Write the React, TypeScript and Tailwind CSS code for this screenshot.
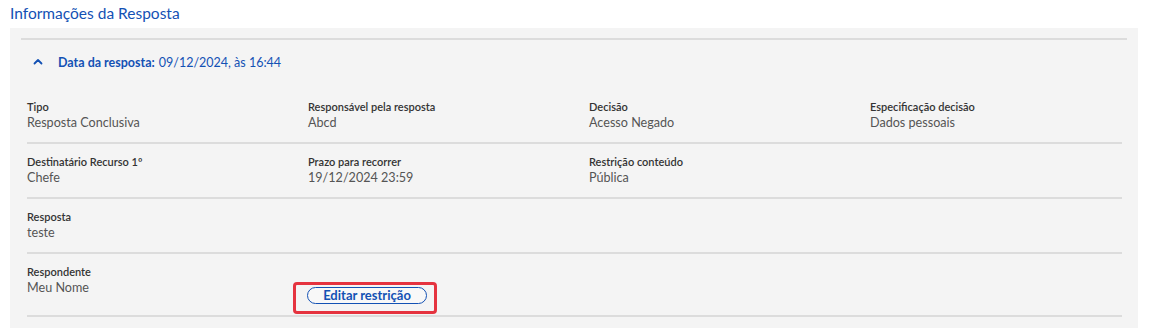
import React from "react";

const font = { fontFamily: "Lato, 'Open Sans', sans-serif" };

function Field({ label, value }: { label: string; value?: string }) {
  return (
    <div className="flex flex-col">
      <div className="text-[11px] leading-[16px] font-semibold text-[#333333]">{label}</div>
      {value !== undefined && (
        <div className="text-[12.6px] leading-[16px] text-[#555555]">{value}</div>
      )}
    </div>
  );
}

export default function App() {
  return (
    <div className="w-[1150px] h-[333px] bg-white" style={font}>
      <div className="h-[28px] pl-[10px] flex items-center text-[15.5px] text-[#1351b4]">
        Informações da Resposta
      </div>
      <div className="ml-[10px] w-[1128px] bg-[#f4f4f4] px-[11px] pt-[10px] pb-[11px]">
        <div className="h-[2px] bg-[#dcdcdc]" />
        <div className="h-[46px] flex items-center pl-[12px] text-[12.5px] text-[#1351b4]">
          <svg width="10" height="7" viewBox="0 0 10 7" className="mr-[15px] -mt-[3px]">
            <path d="M1.5 5.5 L5 2 L8.5 5.5" fill="none" stroke="#1351b4" strokeWidth="1.8" strokeLinecap="round" strokeLinejoin="round" />
          </svg>
          <span className="font-bold">Data da resposta:</span>
          <span className="ml-[4px]">09/12/2024, às 16:44</span>
        </div>
        <div className="ml-[6px] mr-[5px] mt-[3px]">
          <div className="grid grid-cols-[281px_281px_281px_1fr] pt-[10px] pb-[11px] border-b-2 border-[#dcdcdc]">
            <Field label="Tipo" value="Resposta Conclusiva" />
            <Field label="Responsável pela resposta" value="Abcd" />
            <Field label="Decisão" value="Acesso Negado" />
            <Field label="Especificação decisão" value="Dados pessoais" />
          </div>
          <div className="grid grid-cols-[281px_281px_281px_1fr] pt-[10px] pb-[11px] border-b-2 border-[#dcdcdc]">
            <Field label="Destinatário Recurso 1º" value="Chefe" />
            <Field label="Prazo para recorrer" value="19/12/2024 23:59" />
            <Field label="Restrição conteúdo" value="Pública" />
            <div />
          </div>
          <div className="grid grid-cols-[281px_281px_281px_1fr] pt-[10px] pb-[11px] border-b-2 border-[#dcdcdc]">
            <Field label="Resposta" value="teste" />
          </div>
          <div className="grid grid-cols-[281px_281px_281px_1fr] pt-[10px] pb-[1px] border-b-2 border-[#dcdcdc]">
            <Field label="Respondente" value="Meu Nome" />
            <div className="pt-[18px] -ml-[15px]">
              <div className="inline-flex border-[3px] border-[#e5333f] rounded-[4px] pl-[11px] pr-[7px] pt-[2px] pb-[7px]">
                <button className="h-[17px] w-[120px] rounded-full border border-[#1351b4] bg-[#f8f8f8] text-[13px] leading-[15px] font-bold text-[#1351b4] flex items-center justify-center">
                  Editar restrição
                </button>
              </div>
            </div>
          </div>
        </div>
      </div>
    </div>
  );
}
